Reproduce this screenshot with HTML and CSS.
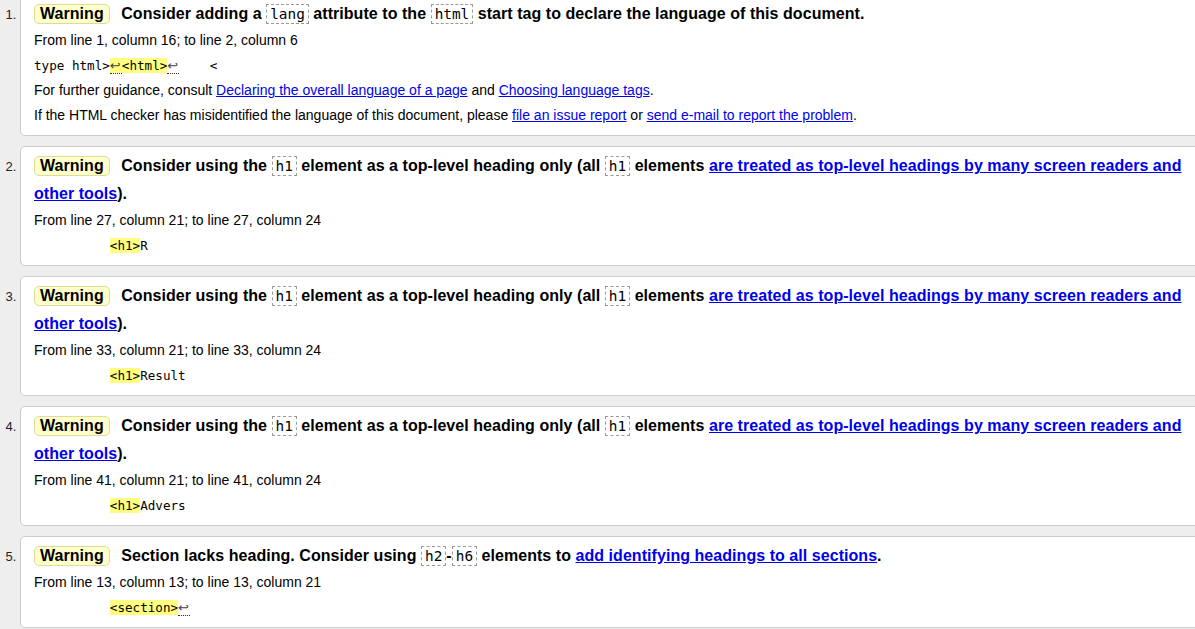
FILE: index.html
```html
<!DOCTYPE html>
<html lang="en">
<head>
<meta charset="utf-8">
<title>Messages</title>
<link rel="stylesheet" href="styles.css">
</head>
<body>
<ol class="messages">
  <li class="msg">
    <p class="title"><strong class="badge">Warning</strong> <span>Consider adding a <code>lang</code> attribute to the <code>html</code> start tag to declare the language of this document.</span></p>
    <p class="line">From line 1, column 16; to line 2, column 6</p>
    <p class="line extract"><code>type html&gt;<b><span class="lf">↩</span>&lt;html&gt;</b><span class="lf">↩</span>    &lt;</code></p>
    <p class="line">For further guidance, consult <a href="#">Declaring the overall language of a page</a> and <a href="#">Choosing language tags</a>.</p>
    <p class="line">If the HTML checker has misidentified the language of this document, please <a href="#">file an issue report</a> or <a href="#">send e-mail to report the problem</a>.</p>
  </li>
  <li class="msg">
    <p class="title"><strong class="badge">Warning</strong> <span>Consider using the <code>h1</code> element as a top-level heading only (all <code>h1</code> elements <a href="#">are treated as top-level headings by many screen readers and other tools</a>).</span></p>
    <p class="line">From line 27, column 21; to line 27, column 24</p>
    <p class="line extract"><code>          <b>&lt;h1&gt;</b>R</code></p>
  </li>
  <li class="msg">
    <p class="title"><strong class="badge">Warning</strong> <span>Consider using the <code>h1</code> element as a top-level heading only (all <code>h1</code> elements <a href="#">are treated as top-level headings by many screen readers and other tools</a>).</span></p>
    <p class="line">From line 33, column 21; to line 33, column 24</p>
    <p class="line extract"><code>          <b>&lt;h1&gt;</b>Result</code></p>
  </li>
  <li class="msg">
    <p class="title"><strong class="badge">Warning</strong> <span>Consider using the <code>h1</code> element as a top-level heading only (all <code>h1</code> elements <a href="#">are treated as top-level headings by many screen readers and other tools</a>).</span></p>
    <p class="line">From line 41, column 21; to line 41, column 24</p>
    <p class="line extract"><code>          <b>&lt;h1&gt;</b>Advers</code></p>
  </li>
  <li class="msg">
    <p class="title"><strong class="badge">Warning</strong> <span>Section lacks heading. Consider using <code>h2</code>-<code>h6</code> elements to <a href="#">add identifying headings to all sections</a>.</span></p>
    <p class="line">From line 13, column 13; to line 13, column 21</p>
    <p class="line extract"><code>          <b>&lt;section&gt;</b><span class="lf">↩</span></code></p>
  </li>
</ol>
</body>
</html>
```
FILE: styles.css
```css
html {
  overflow: hidden;
  background: #eeeeee;
}
body {
  margin: 0;
  font-family: "Liberation Sans", Arial, sans-serif;
  color: #000;
}
.messages {
  margin: -6px -12px 0 20px;
  padding: 0;
  list-style: decimal outside;
}
.msg {
  background: #fff;
  border: 1px solid #cccccc;
  border-radius: 5px;
  padding: 5px 13px 7px 13px;
  margin: 0 0 10px 0;
}
.msg::marker {
  font-size: 13px;
  color: #222;
}
.title {
  margin: 0;
  font-size: 16px;
  line-height: 28px;
  font-weight: bold;
  letter-spacing: 0.05px;
}
.badge {
  display: inline-block;
  line-height: 18px;
  background: #ffffcc;
  border: 1px solid #dddd99;
  border-radius: 5px;
  padding: 0 5px;
  margin-right: 7px;
}
.title code {
  font-family: "DejaVu Sans Mono", "Liberation Mono", monospace;
  font-size: 0.9em;
  font-weight: normal;
  letter-spacing: 0;
  border: 1px dashed #999;
  padding: 1px 3px;
}
.line {
  margin: 0;
  font-size: 14px;
  line-height: 25px;
}
.extract code {
  font-family: "DejaVu Sans Mono", "Liberation Mono", monospace;
  font-size: 12.6px;
  white-space: pre;
}
.extract b {
  font-weight: normal;
  background: #ffff80;
}
.lf {
  display: inline-block;
  width: 12px;
  line-height: 14px;
  font-family: "DejaVu Sans", sans-serif;
  font-size: 13px;
  color: #444;
  border-bottom: 1px dotted #333;
}
a {
  color: #0000ee;
  text-decoration: underline;
}
```
